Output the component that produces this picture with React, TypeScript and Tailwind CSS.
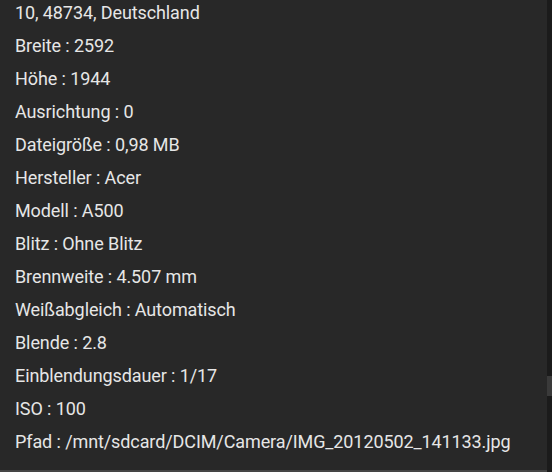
const rows: string[] = [
  "10, 48734, Deutschland",
  "Breite : 2592",
  "Höhe : 1944",
  "Ausrichtung : 0",
  "Dateigröße : 0,98 MB",
  "Hersteller : Acer",
  "Modell : A500",
  "Blitz : Ohne Blitz",
  "Brennweite : 4.507 mm",
  "Weißabgleich : Automatisch",
  "Blende : 2.8",
  "Einblendungsdauer : 1/17",
  "ISO : 100",
  "Pfad : /mnt/sdcard/DCIM/Camera/IMG_20120502_141133.jpg",
];

export default function App() {
  return (
    <div className="flex h-[472px] w-[552px] overflow-hidden bg-[#282828] font-['Roboto',sans-serif]">
      <div className="flex flex-1 flex-col">
        <ul className="mt-[-4px] flex-1 pl-[15px] text-[18px] leading-[33px] tracking-[-0.1px] text-[#e6e6e6]">
          {rows.map((row) => (
            <li key={row} className="whitespace-nowrap">
              {row}
            </li>
          ))}
        </ul>
        <div className="h-[2px] bg-[#454545]" />
      </div>
      <div className="flex w-[5px] flex-col bg-[#1b1b1b] pt-[376px]">
        <div className="h-[20px] bg-[#3a3a3a]" />
      </div>
    </div>
  );
}
